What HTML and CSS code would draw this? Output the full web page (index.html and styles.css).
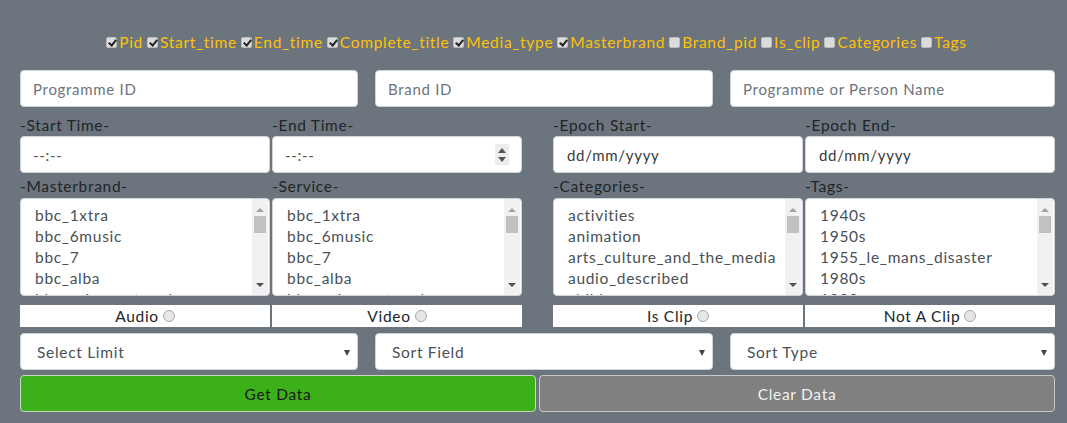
FILE: index.html
```html
<!DOCTYPE html>
<html>
<head>
<meta charset="utf-8">
<link rel="stylesheet" href="styles.css">
</head>
<body>
<div class="page">
  <div class="fields">
    <label class="cb"><span class="box on"></span>Pid</label>
    <label class="cb"><span class="box on"></span>Start_time</label>
    <label class="cb"><span class="box on"></span>End_time</label>
    <label class="cb"><span class="box on"></span>Complete_title</label>
    <label class="cb"><span class="box on"></span>Media_type</label>
    <label class="cb"><span class="box on"></span>Masterbrand</label>
    <label class="cb"><span class="box"></span>Brand_pid</label>
    <label class="cb"><span class="box"></span>Is_clip</label>
    <label class="cb"><span class="box"></span>Categories</label>
    <label class="cb"><span class="box"></span>Tags</label>
  </div>

  <div class="row3">
    <input class="ctl" type="text" placeholder="Programme ID">
    <input class="ctl" type="text" placeholder="Brand ID">
    <input class="ctl" type="text" placeholder="Programme or Person Name">
  </div>

  <div class="halves time-row">
    <div class="quad">
      <div class="cell"><div class="lbl">-Start Time-</div><input class="ctl time" type="text" placeholder="--:--"></div>
      <div class="cell"><div class="lbl">-End Time-</div>
        <div class="spinwrap"><input class="ctl time" type="text" placeholder="--:--"><span class="spin"><span class="up"></span><span class="dn"></span></span></div>
      </div>
    </div>
    <div class="quad">
      <div class="cell"><div class="lbl">-Epoch Start-</div><input class="ctl date" type="text" placeholder="dd/mm/yyyy"></div>
      <div class="cell"><div class="lbl">-Epoch End-</div><input class="ctl date" type="text" placeholder="dd/mm/yyyy"></div>
    </div>
  </div>

  <div class="halves list-row">
    <div class="quad">
      <div class="cell"><div class="lbl">-Masterbrand-</div>
        <div class="list"><div class="items"><div>bbc_1xtra</div><div>bbc_6music</div><div>bbc_7</div><div>bbc_alba</div><div>bbc_asian_network</div></div>
          <div class="sb"><span class="sup"></span><span class="thumb"></span><span class="sdn"></span></div></div>
      </div>
      <div class="cell"><div class="lbl">-Service-</div>
        <div class="list"><div class="items"><div>bbc_1xtra</div><div>bbc_6music</div><div>bbc_7</div><div>bbc_alba</div><div>bbc_asian_network</div></div>
          <div class="sb"><span class="sup"></span><span class="thumb"></span><span class="sdn"></span></div></div>
      </div>
    </div>
    <div class="quad">
      <div class="cell"><div class="lbl">-Categories-</div>
        <div class="list"><div class="items"><div>activities</div><div>animation</div><div>arts_culture_and_the_media</div><div>audio_described</div><div>childrens</div></div>
          <div class="sb"><span class="sup"></span><span class="thumb"></span><span class="sdn"></span></div></div>
      </div>
      <div class="cell"><div class="lbl">-Tags-</div>
        <div class="list"><div class="items"><div>1940s</div><div>1950s</div><div>1955_le_mans_disaster</div><div>1980s</div><div>1990s</div></div>
          <div class="sb"><span class="sup"></span><span class="thumb"></span><span class="sdn"></span></div></div>
      </div>
    </div>
  </div>

  <div class="halves radio-row">
    <div class="quad">
      <label class="radio">Audio<span class="dot"></span></label>
      <label class="radio">Video<span class="dot"></span></label>
    </div>
    <div class="quad">
      <label class="radio">Is Clip<span class="dot"></span></label>
      <label class="radio">Not A Clip<span class="dot"></span></label>
    </div>
  </div>

  <div class="row3 sel-row">
    <div class="sel">Select Limit<span class="arr"></span></div>
    <div class="sel">Sort Field<span class="arr"></span></div>
    <div class="sel">Sort Type<span class="arr"></span></div>
  </div>

  <div class="btns">
    <button class="btn get">Get Data</button>
    <button class="btn clear">Clear Data</button>
  </div>
</div>
</body>
</html>
```

FILE: styles.css
```css
* { box-sizing: border-box; }
html, body { margin: 0; padding: 0; }
body {
  background: #6c757d;
  font-family: Lato, "Open Sans", sans-serif;
  letter-spacing: 0.7px;
  color: #212529;
  width: 1067px;
  height: 423px;
  overflow: hidden;
}
.page { padding: 30px 12px 0 20px; }

.fields {
  display: flex;
  justify-content: center;
  align-items: center;
  height: 24px;
  padding-left: 2px;
}
.cb {
  display: inline-flex;
  align-items: center;
  color: #ffc107;
  font-size: 15.5px;
  margin-right: 4px;
}
.box {
  width: 11px; height: 11px;
  margin-right: 2px;
  background: #dcdcdc;
  border: 1px solid #bdbdbd;
  border-radius: 2px;
  position: relative;
}
.box.on::after {
  content: "";
  position: absolute;
  left: 3px; top: 0px;
  width: 3px; height: 6px;
  border: solid #222;
  border-width: 0 2px 2px 0;
  transform: rotate(40deg);
}

.row3 {
  display: grid;
  grid-template-columns: 338px 338px 1fr;
  column-gap: 17px;
  margin-top: 16px;
}
.ctl {
  display: block;
  width: 100%;
  height: 37px;
  border: 1px solid #ced4da;
  border-radius: 4px;
  background: #fff;
  font-family: inherit;
  letter-spacing: inherit;
  font-size: 15px;
  padding: 0 12px;
  color: #495057;
  outline: none;
}
.ctl::placeholder { color: #6c757d; }
.time::placeholder { color: #555; }
.date::placeholder { color: #3a3a3a; }
.date { padding-left: 13px; }

.halves {
  display: grid;
  grid-template-columns: 502px 502px;
  column-gap: 31px;
}
.quad {
  display: grid;
  grid-template-columns: 250px 250px;
  column-gap: 2px;
}
.cell { display: flex; flex-direction: column; }
.lbl {
  height: 21px;
  line-height: 21px;
  font-size: 15.5px;
  color: #212529;
}
.time-row { margin-top: 8px; }
.list-row { margin-top: 3px; }
.list-row .lbl { margin-bottom: 1px; }

.spinwrap { position: relative; }
.spin {
  position: absolute;
  right: 13px; top: 8px;
  width: 14px; height: 21px;
  background: #ececec;
  display: flex;
  flex-direction: column;
  align-items: center;
  justify-content: center;
  gap: 4px;
}
.spin .up, .spin .dn { width: 0; height: 0; border-left: 4px solid transparent; border-right: 4px solid transparent; }
.spin .up { border-bottom: 5px solid #555; }
.spin .dn { border-top: 5px solid #555; }

.list {
  position: relative;
  height: 98px;
  background: #fff;
  border: 1px solid #ced4da;
  border-radius: 4px;
  overflow: hidden;
}
.items {
  padding: 6px 0 0 14px;
  font-size: 15.5px;
  line-height: 21px;
  color: #495057;
  white-space: nowrap;
}
.sb {
  position: absolute;
  right: 1px; top: 0; bottom: 0;
  width: 16px;
  background: #f1f1f1;
}
.sb .sup, .sb .sdn {
  position: absolute; left: 4px;
  width: 0; height: 0;
  border-left: 4px solid transparent; border-right: 4px solid transparent;
}
.sb .sup { top: 9px; border-bottom: 4px solid #a3a3a3; }
.sb .sdn { bottom: 8px; border-top: 4px solid #505050; }
.sb .thumb {
  position: absolute; left: 2px; top: 17px;
  width: 12px; height: 17px;
  background: #c1c1c1;
}

.radio-row { margin-top: 9px; }
.radio {
  height: 22px;
  background: #fff;
  display: flex;
  align-items: center;
  justify-content: center;
  font-size: 15.5px;
  color: #212529;
}
.dot {
  width: 12px; height: 12px;
  border-radius: 50%;
  border: 1px solid #a9a9a9;
  background: #e6e6e6;
  margin-left: 4px;
}

.sel-row { margin-top: 6px; }
.sel {
  position: relative;
  height: 37px;
  background: #fff;
  border: 1px solid #ced4da;
  border-radius: 4px;
  font-size: 15.5px;
  color: #495057;
  display: flex;
  align-items: center;
  padding-left: 16px;
}
.arr {
  position: absolute;
  right: 7px; top: 16px;
  width: 0; height: 0;
  border-left: 3.5px solid transparent; border-right: 3.5px solid transparent;
  border-top: 6px solid #444;
}

.btns {
  display: grid;
  grid-template-columns: 516px 516px;
  column-gap: 3px;
  margin-top: 5px;
}
.btn {
  height: 37px;
  border-radius: 4px;
  font-family: inherit;
  letter-spacing: inherit;
  font-size: 15.5px;
}
.get { background: #3cb019; border: 1px solid #c8d8c0; color: #1a1a1a; }
.clear { background: #808080; border: 1px solid #c8c8c8; color: #f2f2f2; }
```
